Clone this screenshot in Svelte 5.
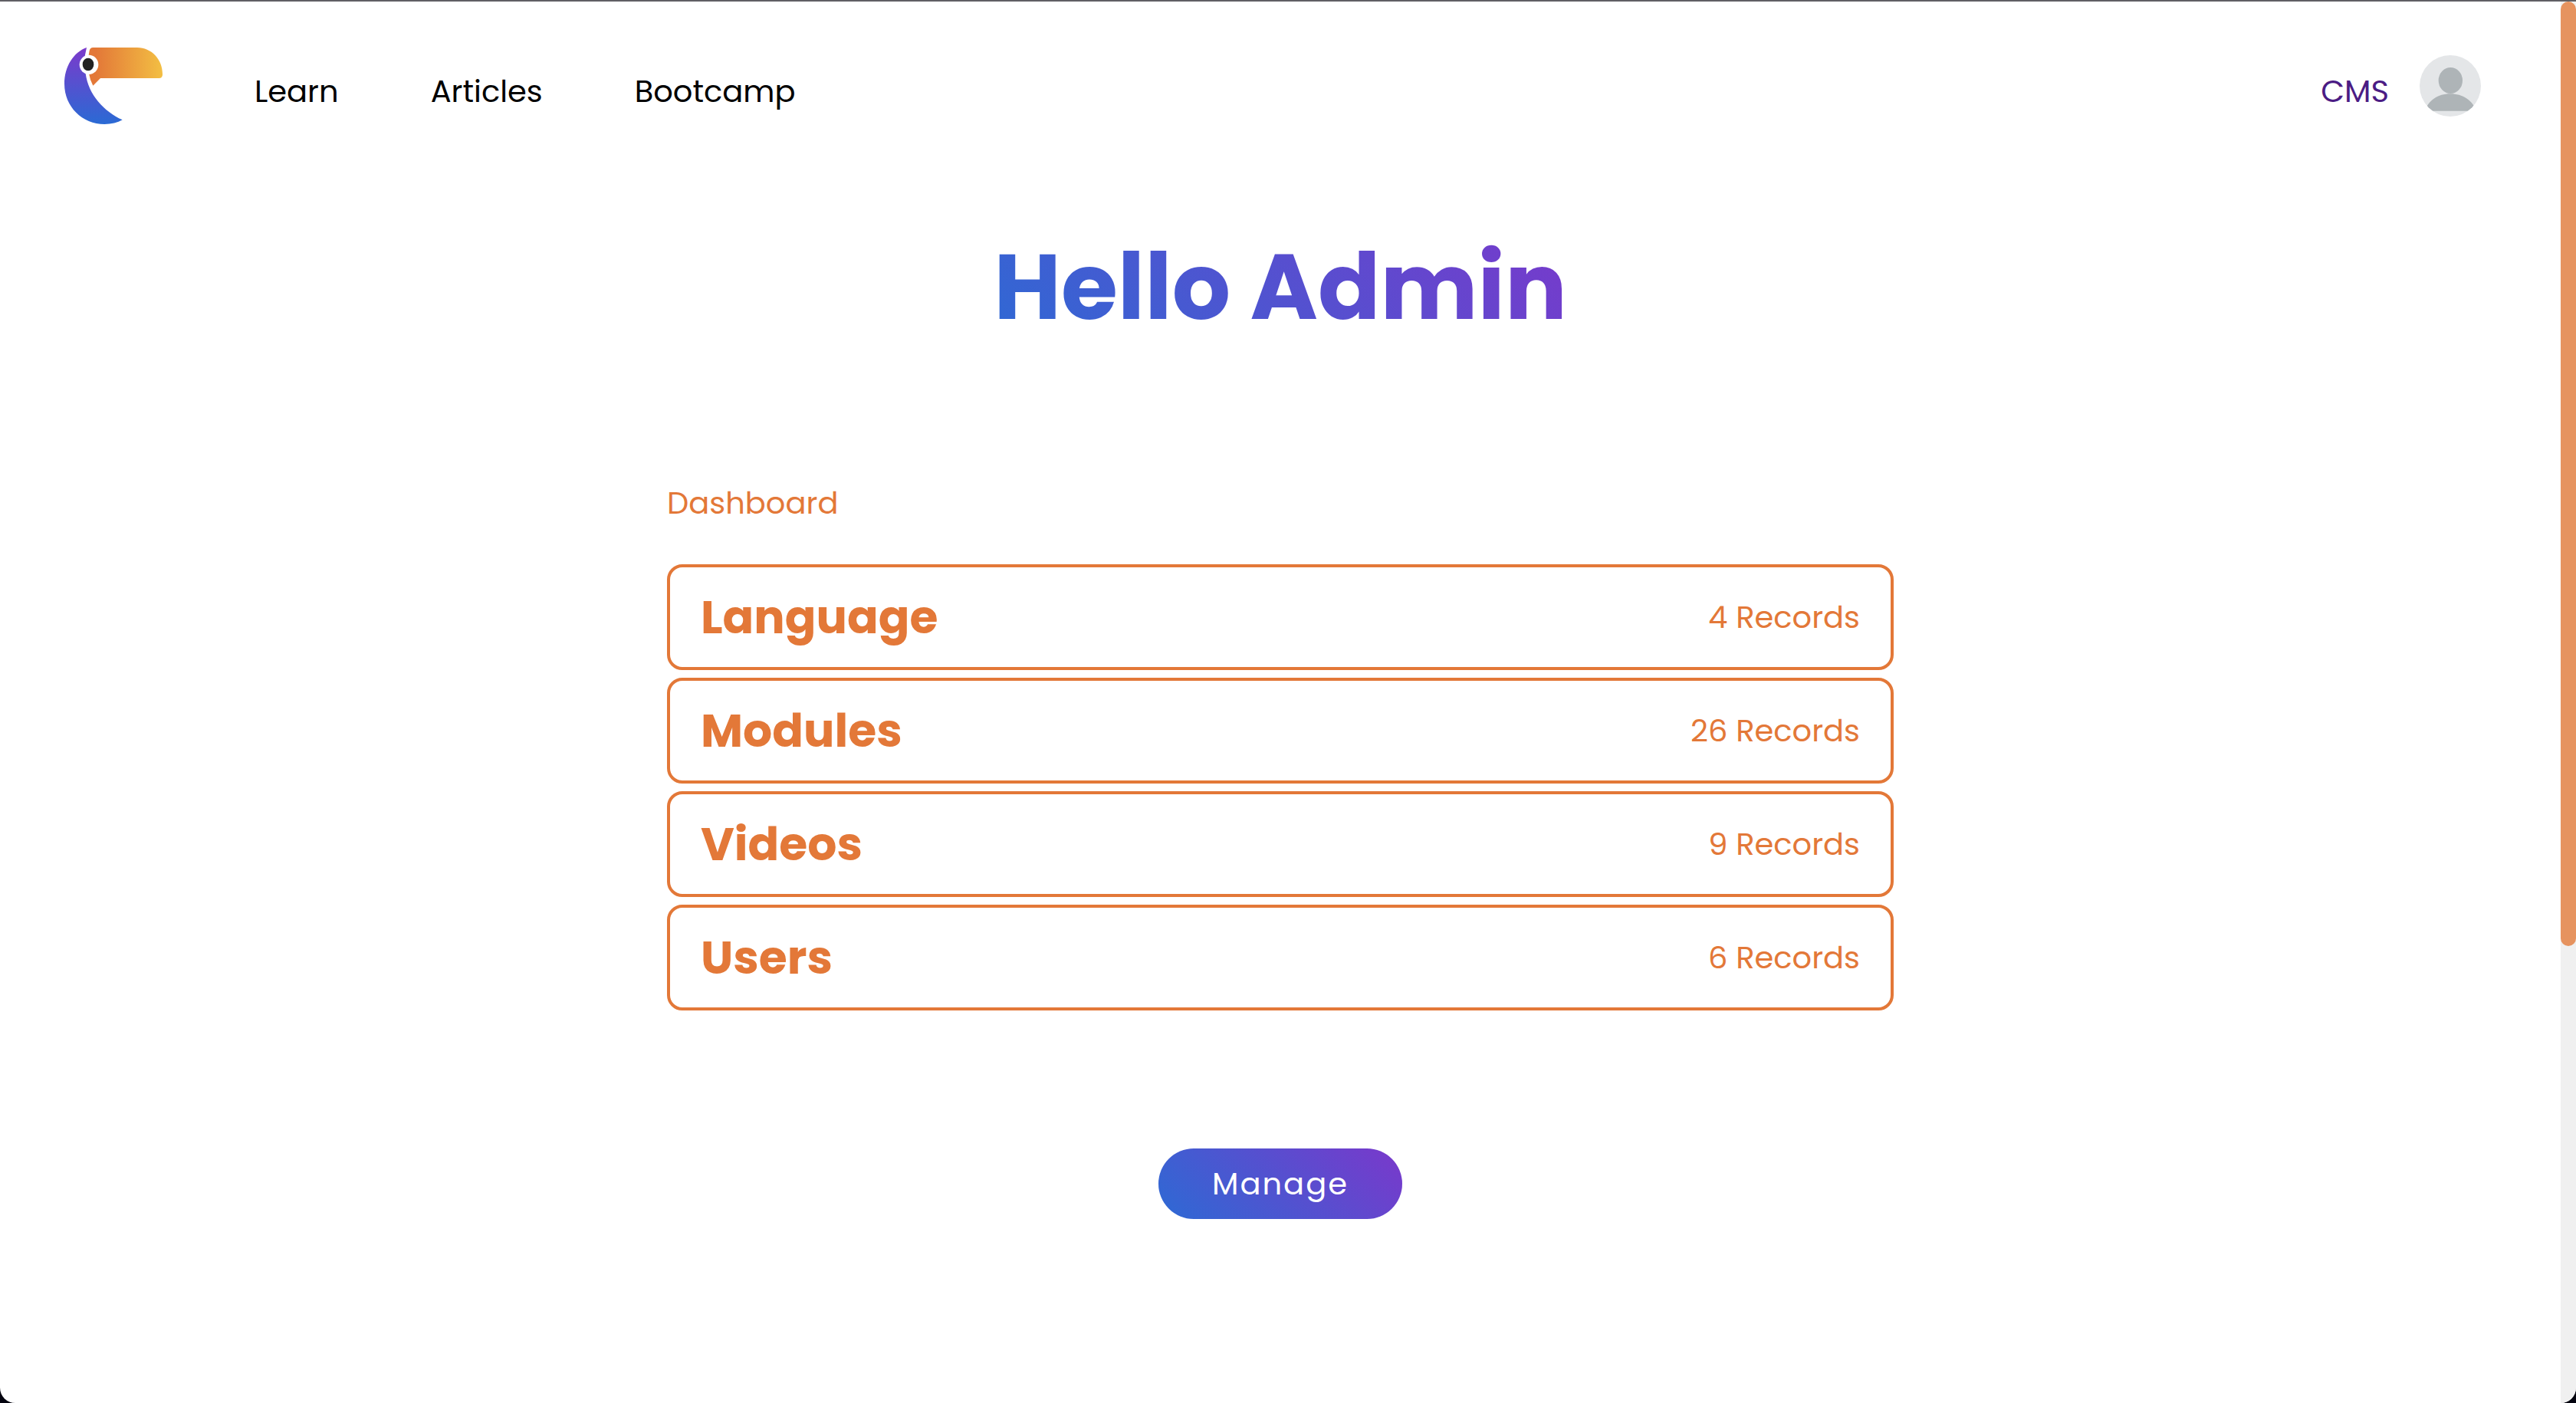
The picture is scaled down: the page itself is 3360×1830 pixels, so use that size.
<script>
  const navLinks = ['Learn', 'Articles', 'Bootcamp'];
  const collections = [
    { name: 'Language', count: 4 },
    { name: 'Modules', count: 26 },
    { name: 'Videos', count: 9 },
    { name: 'Users', count: 6 }
  ];
</script>

<div class="window">
  <div class="page">
    <header>
      <a class="logo" href="#home" aria-label="Home">
        <svg viewBox="72 66 384 300" aria-hidden="true">
          <defs>
            <linearGradient id="beak" x1="0" x2="1" y1="0" y2="0">
              <stop offset="0.1" stop-color="#e37838" />
              <stop offset="1" stop-color="#f3bf43" />
            </linearGradient>
            <linearGradient id="body" x1="0" x2="0" y1="0" y2="1">
              <stop offset="0" stop-color="#7c3acb" />
              <stop offset="1" stop-color="#2a6ad4" />
            </linearGradient>
          </defs>
          <path fill="url(#body)" d="M159 66C108 84 72 140 72 208C72 298 142 366 229 366C256 366 280 360 299 349C226 316 166 250 155 168L152 100Z" />
          <path fill="url(#beak)" d="M184 66H357C412 66 456 112 456 170V172Q456 186 442 186H213L184 215Q172 193 168 168L167 96L170 78Q173 66 184 66Z" />
          <ellipse cx="168" cy="133" rx="37" ry="38" fill="#fff" />
          <ellipse cx="165" cy="132" rx="22" ry="25" fill="#222222" />
        </svg>
      </a>
      <nav>
        {#each navLinks as link}
          <a href={'#' + link.toLowerCase()}>{link}</a>
        {/each}
      </nav>
      <div class="account">
        <a class="cms" href="#cms">CMS</a>
        <button class="avatar" aria-label="Account">
          <svg viewBox="528 66 240 240" aria-hidden="true">
            <clipPath id="disc"><circle cx="648" cy="186" r="120" /></clipPath>
            <g clip-path="url(#disc)">
              <rect x="528" y="66" width="240" height="240" fill="#e4e6e8" />
              <ellipse cx="649" cy="165" rx="47" ry="51" fill="#aeb4b7" />
              <path fill="#aeb4b7" d="M550 284C560 244 600 217 648 217S738 244 748 284Z" />
            </g>
          </svg>
        </button>
      </div>
    </header>

    <main>
      <h1>Hello Admin</h1>
      <section>
        <h2>Dashboard</h2>
        <ul>
          {#each collections as item}
            <li>
              <a class="card" href={'#' + item.name.toLowerCase()}>
                <strong>{item.name}</strong>
                <span>{item.count} Records</span>
              </a>
            </li>
          {/each}
        </ul>
      </section>
      <button class="manage">Manage</button>
    </main>
  </div>
  <div class="track"><div class="thumb"></div></div>
</div>

<style>
  :global(body) {
    margin: 0;
    background: #04040f;
  }

  .window {
    box-sizing: border-box;
    display: grid;
    grid-template-columns: 1fr 20px;
    min-height: 100vh;
    border-top: 2px solid #605f64;
    border-radius: 0 0 20px 20px;
    overflow: hidden;
    background: #fff;
    color: #000;
    font-family: Poppins, Inter, 'Liberation Sans', sans-serif;
    font-size: 40px;
    line-height: 60px;
  }

  header {
    display: flex;
    align-items: center;
    padding: 60px 104px 0 84px;
  }

  .logo,
  svg {
    display: block;
  }

  .logo {
    width: 128px;
  }

  nav {
    display: flex;
    gap: 120px;
    margin-left: 120px;
  }

  nav a,
  .cms {
    padding-top: 14px;
    color: #000;
    text-decoration: none;
  }

  .account {
    display: flex;
    align-items: center;
    gap: 40px;
    margin-left: auto;
  }

  .cms {
    color: #4b1c84;
  }

  .avatar {
    width: 80px;
    padding: 0;
    border: 0;
    background: none;
  }

  main {
    display: flex;
    flex-direction: column;
    align-items: center;
    padding: 122px 40px;
  }

  h1 {
    margin: 0;
    background: linear-gradient(45deg, #2d6ad4, #7a38cb);
    background-clip: text;
    color: transparent;
    font-size: 120px;
    font-weight: 700;
    line-height: 180px;
  }

  section {
    width: 100%;
    max-width: 1600px;
    margin-top: 162px;
    color: #e37838;
  }

  h2 {
    margin: 0 0 50px;
    font-size: 40px;
    font-weight: 400;
    line-height: 60px;
  }

  ul {
    display: grid;
    gap: 10px;
    margin: 0;
    padding: 0;
    list-style: none;
  }

  .card {
    display: flex;
    align-items: center;
    justify-content: space-between;
    padding: 20px 40px;
    border: 4px solid #e37838;
    border-radius: 20px;
    color: inherit;
    text-decoration: none;
  }

  strong {
    font-size: 60px;
    font-weight: 700;
    line-height: 90px;
  }

  .manage {
    margin-top: 180px;
    padding: 16px 70px;
    border: 0;
    border-radius: 46px;
    background: linear-gradient(45deg, #2d6ad4, #7a38cb);
    color: #fff;
    font: inherit;
    letter-spacing: 2px;
  }

  .track {
    background: #f0f0f0;
  }

  .thumb {
    height: 1232px;
    border-radius: 10px;
    background: #e6935f;
  }
</style>
